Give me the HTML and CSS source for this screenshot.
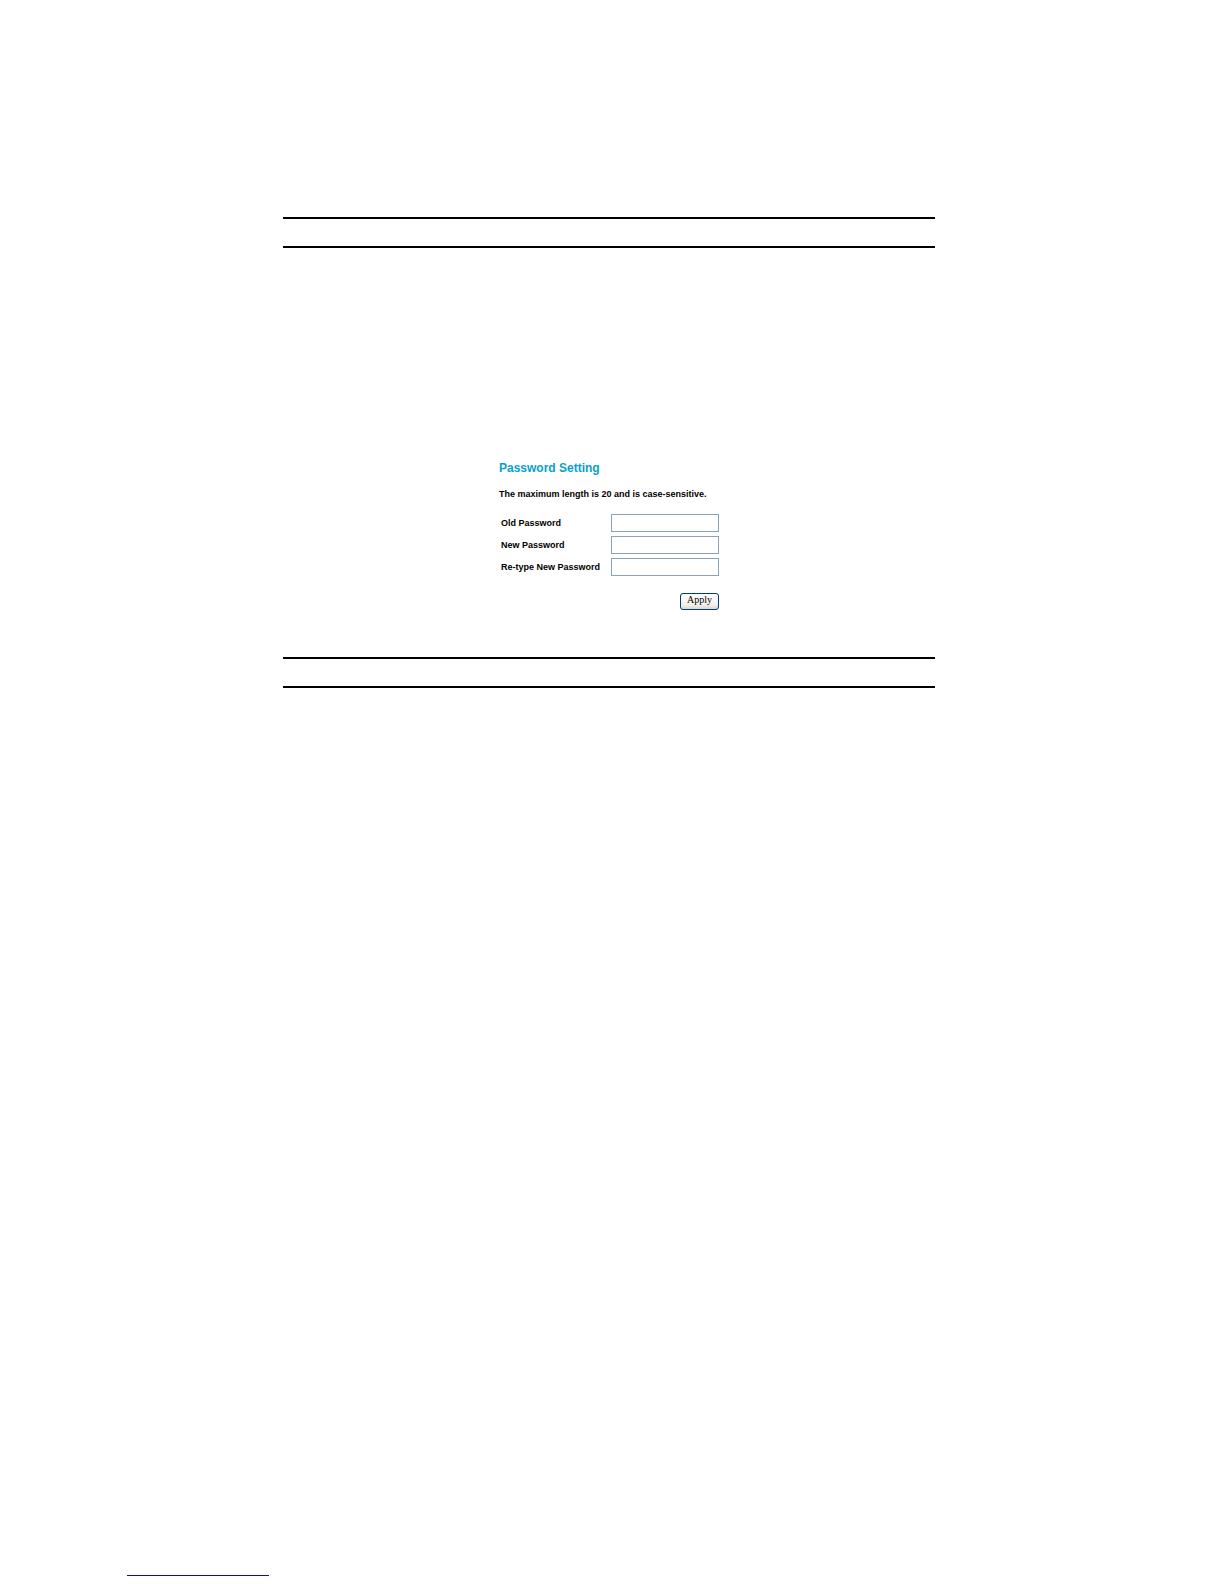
FILE: index.html
```html
<!DOCTYPE html>
<html lang="en">
<head>
    <meta charset="UTF-8">
    <meta name="viewport" content="width=device-width, initial-scale=1.0">
    <title>Password Setting</title>
    <link rel="stylesheet" href="styles.css">
</head>
<body>

<main class="content">
    <div class="band"></div>
    <form class="password-form">
        <h1 class="title">Password Setting</h1>
        <p class="hint">The maximum length is 20 and is case-sensitive.</p>
        <div class="fields">
            <label for="oldPassword">Old Password</label>
            <input type="password" id="oldPassword" maxlength="20">
            <label for="newPassword">New Password</label>
            <input type="password" id="newPassword" maxlength="20">
            <label for="retypePassword">Re-type New Password</label>
            <input type="password" id="retypePassword" maxlength="20">
        </div>
        <button type="button" class="apply">Apply</button>
    </form>
    <div class="band"></div>
</main>

<footer class="footer">
    <hr class="footer-line">
</footer>

</body>
</html>
```

FILE: styles.css
```css
*{
    padding: 0;
    margin: 0;
    box-sizing: border-box;
}

body{
    display: flex;
    flex-direction: column;
    justify-content: space-between;
    min-height: 100vh;
    background: #fff;
    color: #000;
    font-family: "Liberation Sans", Arial, sans-serif;
}

.content{
    padding: 217px 289px 0 283px;
}

.band{
    height: 31px;
    border-top: 2px solid #000;
    border-bottom: 2px solid #000;
}

.password-form{
    display: flex;
    flex-direction: column;
    width: 220px;
    margin: 212px auto 47px;
}

.title{
    color: #0a9fcd;
    font-size: 12px;
    line-height: 16px;
}

.hint{
    margin-top: 12px;
    font-size: 9px;
    font-weight: bold;
    line-height: 12px;
    white-space: nowrap;
}

.fields{
    display: grid;
    grid-template-columns: 1fr 108px;
    row-gap: 4px;
    align-items: center;
    margin-top: 14px;
    padding-left: 2px;
    font-size: 9px;
    font-weight: bold;
    line-height: 18px;
}

.fields input{
    width: 100%;
    height: 18px;
    padding: 0 2px;
    border: 1px solid #8ba2bf;
    background: #fff;
    font-size: 9px;
}

.apply{
    align-self: flex-end;
    width: 39px;
    height: 17px;
    margin-top: 17px;
    padding-bottom: 3px;
    border: 1px solid #003c74;
    border-radius: 3px;
    background: linear-gradient(#fff, #f2f1ec 70%, #dcd8cf);
    color: #000;
    font-family: "Liberation Serif", "Times New Roman", serif;
    font-size: 10px;
    line-height: 12px;
}

.footer{
    padding: 0 127px 8px;
}

.footer-line{
    width: 142px;
    height: 1px;
    border: 0;
    background: #0a1496;
}
```
